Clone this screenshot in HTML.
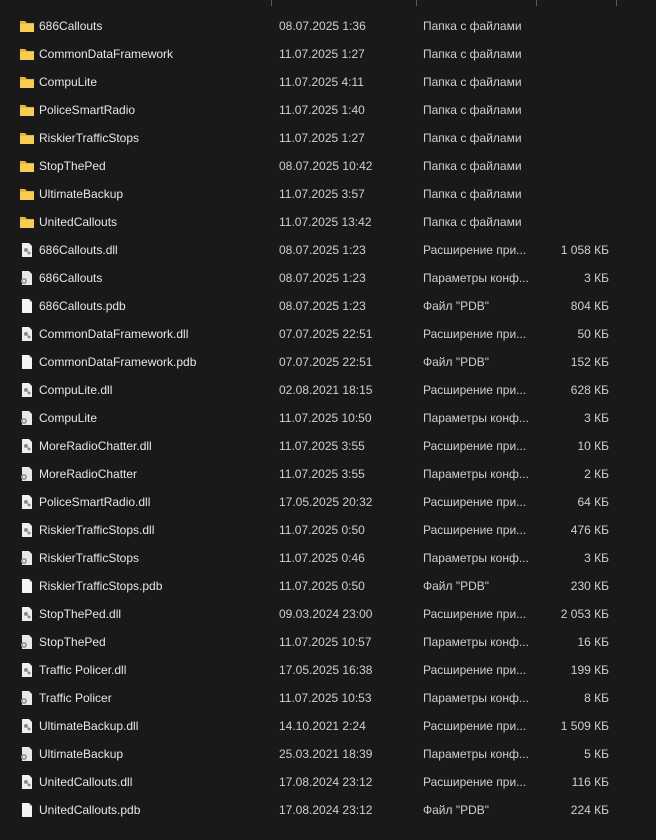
<!DOCTYPE html>
<html><head><meta charset="utf-8"><style>
body{margin:0;background:#191919;width:656px;height:840px;overflow:hidden;font-family:"Liberation Sans","DejaVu Sans",sans-serif;font-size:12px;color:#e6e6e6;position:relative}
.sep{position:absolute;top:0;width:1px;height:6px;background:#5a5a5a}
.r{position:absolute;left:0;width:656px;height:28px;line-height:28px}
.r span{position:absolute;white-space:nowrap}
.n{left:39px}.d{left:279px;color:#cfcfcf}.t{left:423px;color:#cfcfcf}.s{right:47px;color:#cfcfcf}
.ic{position:absolute;left:19px;top:6px}
</style></head><body>
<div class="sep" style="left:271px"></div><div class="sep" style="left:416px"></div><div class="sep" style="left:536px"></div><div class="sep" style="left:616px"></div>
<div id="list"></div>
<script>
const F='<svg class="ic" width="16" height="16"><path d="M1 3h5l2 2h7v9H1z" fill="#e9b73c"/><path d="M1 6h14v8H1z" fill="#f8cc4f"/></svg>';
const P='<svg class="ic" width="16" height="16"><path d="M3 1h7l3 3v11H3z" fill="#f4f4f4"/><path d="M10 1v3h3" fill="#cfcfcf"/></svg>';
const D='<svg class="ic" width="16" height="16"><path d="M3 1h7l3 3v11H3z" fill="#eeeeee"/><circle cx="7" cy="8" r="2" fill="#8a8a8a"/><circle cx="10" cy="11" r="1.5" fill="#8a8a8a"/></svg>';
const C='<svg class="ic" width="16" height="16"><path d="M3 1h7l3 3v11H3z" fill="#e8e8e8"/><circle cx="5" cy="11" r="3" fill="#9a9a9a"/><circle cx="5" cy="11" r="1.2" fill="#e8e8e8"/></svg>';
const rows=[
[F,"686Callouts","08.07.2025 1:36","Папка с файлами",""],
[F,"CommonDataFramework","11.07.2025 1:27","Папка с файлами",""],
[F,"CompuLite","11.07.2025 4:11","Папка с файлами",""],
[F,"PoliceSmartRadio","11.07.2025 1:40","Папка с файлами",""],
[F,"RiskierTrafficStops","11.07.2025 1:27","Папка с файлами",""],
[F,"StopThePed","08.07.2025 10:42","Папка с файлами",""],
[F,"UltimateBackup","11.07.2025 3:57","Папка с файлами",""],
[F,"UnitedCallouts","11.07.2025 13:42","Папка с файлами",""],
[D,"686Callouts.dll","08.07.2025 1:23","Расширение при...","1 058 КБ"],
[C,"686Callouts","08.07.2025 1:23","Параметры конф...","3 КБ"],
[P,"686Callouts.pdb","08.07.2025 1:23","Файл \"PDB\"","804 КБ"],
[D,"CommonDataFramework.dll","07.07.2025 22:51","Расширение при...","50 КБ"],
[P,"CommonDataFramework.pdb","07.07.2025 22:51","Файл \"PDB\"","152 КБ"],
[D,"CompuLite.dll","02.08.2021 18:15","Расширение при...","628 КБ"],
[C,"CompuLite","11.07.2025 10:50","Параметры конф...","3 КБ"],
[D,"MoreRadioChatter.dll","11.07.2025 3:55","Расширение при...","10 КБ"],
[C,"MoreRadioChatter","11.07.2025 3:55","Параметры конф...","2 КБ"],
[D,"PoliceSmartRadio.dll","17.05.2025 20:32","Расширение при...","64 КБ"],
[D,"RiskierTrafficStops.dll","11.07.2025 0:50","Расширение при...","476 КБ"],
[C,"RiskierTrafficStops","11.07.2025 0:46","Параметры конф...","3 КБ"],
[P,"RiskierTrafficStops.pdb","11.07.2025 0:50","Файл \"PDB\"","230 КБ"],
[D,"StopThePed.dll","09.03.2024 23:00","Расширение при...","2 053 КБ"],
[C,"StopThePed","11.07.2025 10:57","Параметры конф...","16 КБ"],
[D,"Traffic Policer.dll","17.05.2025 16:38","Расширение при...","199 КБ"],
[C,"Traffic Policer","11.07.2025 10:53","Параметры конф...","8 КБ"],
[D,"UltimateBackup.dll","14.10.2021 2:24","Расширение при...","1 509 КБ"],
[C,"UltimateBackup","25.03.2021 18:39","Параметры конф...","5 КБ"],
[D,"UnitedCallouts.dll","17.08.2024 23:12","Расширение при...","116 КБ"],
[P,"UnitedCallouts.pdb","17.08.2024 23:12","Файл \"PDB\"","224 КБ"]];
let h='';rows.forEach((r,i)=>{h+=`<div class="r" style="top:${12+i*28}px">${r[0]}<span class="n">${r[1]}</span><span class="d">${r[2]}</span><span class="t">${r[3]}</span><span class="s">${r[4]}</span></div>`});
document.getElementById('list').innerHTML=h;
</script>
</body></html>
